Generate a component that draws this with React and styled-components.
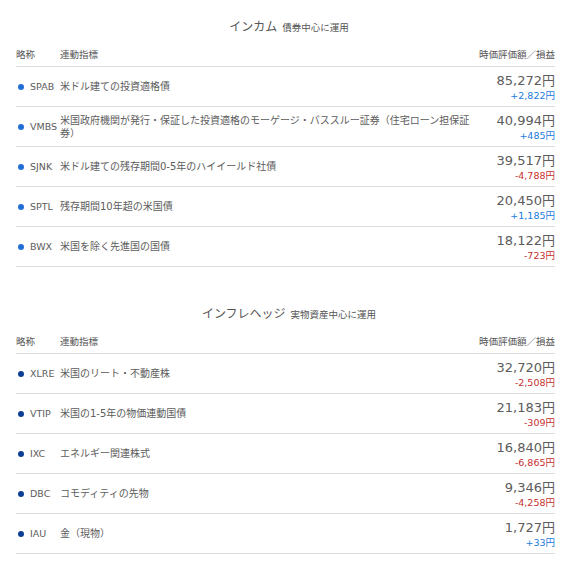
import React from "react";
import styled, { createGlobalStyle } from "styled-components";

const GlobalStyle = createGlobalStyle`
  body {
    margin: 0;
    background: #fff;
    font-family: "DejaVu Sans", "Noto Sans CJK JP", sans-serif;
    color: #555;
  }
`;

const Page = styled.div`
  width: 572px;
  padding: 0 16px;
  box-sizing: border-box;
`;

const Section = styled.section`
  padding-top: ${props => props.top}px;
`;

const Title = styled.h2`
  margin: 0 0 6px;
  text-align: center;
  font-weight: normal;
  font-size: 12px;
  line-height: 16px;
  color: #555;
  padding-left: 6px;
`;

const SubTitle = styled.span`
  font-size: 9.5px;
  margin-left: 5px;
`;

const HeaderRow = styled.div`
  display: flex;
  align-items: center;
  height: 24px;
  border-bottom: 1px solid #ddd;
  font-size: 9.5px;
  color: #555;
  margin-right: 1px;
`;

const HeadShort = styled.div`
  width: 44px;
`;

const HeadIndex = styled.div`
  flex: 1;
`;

const HeadValue = styled.div`
  text-align: right;
`;

const Row = styled.div`
  display: flex;
  align-items: center;
  height: 39px;
  border-bottom: 1px solid #ddd;
  margin-right: 1px;
`;

const Ticker = styled.div`
  width: 44px;
  flex-shrink: 0;
  display: flex;
  align-items: center;
  font-size: 9.5px;
  color: #5c5c5c;
`;

const Dot = styled.span`
  width: 6px;
  height: 6px;
  border-radius: 50%;
  background: ${props => props.color};
  margin: 0 6px 0 2px;
  flex-shrink: 0;
`;

const Desc = styled.div`
  flex: 1;
  font-size: 10px;
  line-height: 13px;
  color: #5c5c5c;
`;

const ValueCol = styled.div`
  width: 78px;
  flex-shrink: 0;
  display: flex;
  flex-direction: column;
  align-items: flex-end;
  white-space: nowrap;
  padding-top: 1px;
`;

const Value = styled.div`
  font-size: 13px;
  line-height: 17px;
  color: #5c5c5c;
`;

const Change = styled.div`
  font-size: 9.5px;
  line-height: 13px;
  color: ${props => (props.up ? "#1a7be0" : "#c62f2f")};
`;

const income = [
  { t: "SPAB", d: "米ドル建ての投資適格債", v: "85,272円", c: "+2,822円" },
  {
    t: "VMBS",
    d: "米国政府機関が発行・保証した投資適格のモーゲージ・パススルー証券（住宅ローン担保証券）",
    v: "40,994円",
    c: "+485円"
  },
  { t: "SJNK", d: "米ドル建ての残存期間0-5年のハイイールド社債", v: "39,517円", c: "-4,788円" },
  { t: "SPTL", d: "残存期間10年超の米国債", v: "20,450円", c: "+1,185円" },
  { t: "BWX", d: "米国を除く先進国の国債", v: "18,122円", c: "-723円" }
];

const hedge = [
  { t: "XLRE", d: "米国のリート・不動産株", v: "32,720円", c: "-2,508円" },
  { t: "VTIP", d: "米国の1-5年の物価連動国債", v: "21,183円", c: "-309円" },
  { t: "IXC", d: "エネルギー関連株式", v: "16,840円", c: "-6,865円" },
  { t: "DBC", d: "コモディティの先物", v: "9,346円", c: "-4,258円" },
  { t: "IAU", d: "金（現物）", v: "1,727円", c: "+33円" }
];

const Holdings = ({ title, sub, rows, dot, top }) => (
  <Section top={top}>
    <Title>
      {title}
      <SubTitle>{sub}</SubTitle>
    </Title>
    <HeaderRow>
      <HeadShort>略称</HeadShort>
      <HeadIndex>連動指標</HeadIndex>
      <HeadValue>時価評価額／損益</HeadValue>
    </HeaderRow>
    {rows.map(r => (
      <Row key={r.t}>
        <Ticker>
          <Dot color={dot} />
          {r.t}
        </Ticker>
        <Desc>{r.d}</Desc>
        <ValueCol>
          <Value>{r.v}</Value>
          <Change up={r.c.startsWith("+")}>{r.c}</Change>
        </ValueCol>
      </Row>
    ))}
  </Section>
);

const App = () => (
  <>
    <GlobalStyle />
    <Page>
      <Holdings title="インカム" sub="債券中心に運用" rows={income} dot="#1f6fd6" top={19} />
      <Holdings title="インフレヘッジ" sub="実物資産中心に運用" rows={hedge} dot="#0c3f96" top={39} />
    </Page>
  </>
);

export default App;
